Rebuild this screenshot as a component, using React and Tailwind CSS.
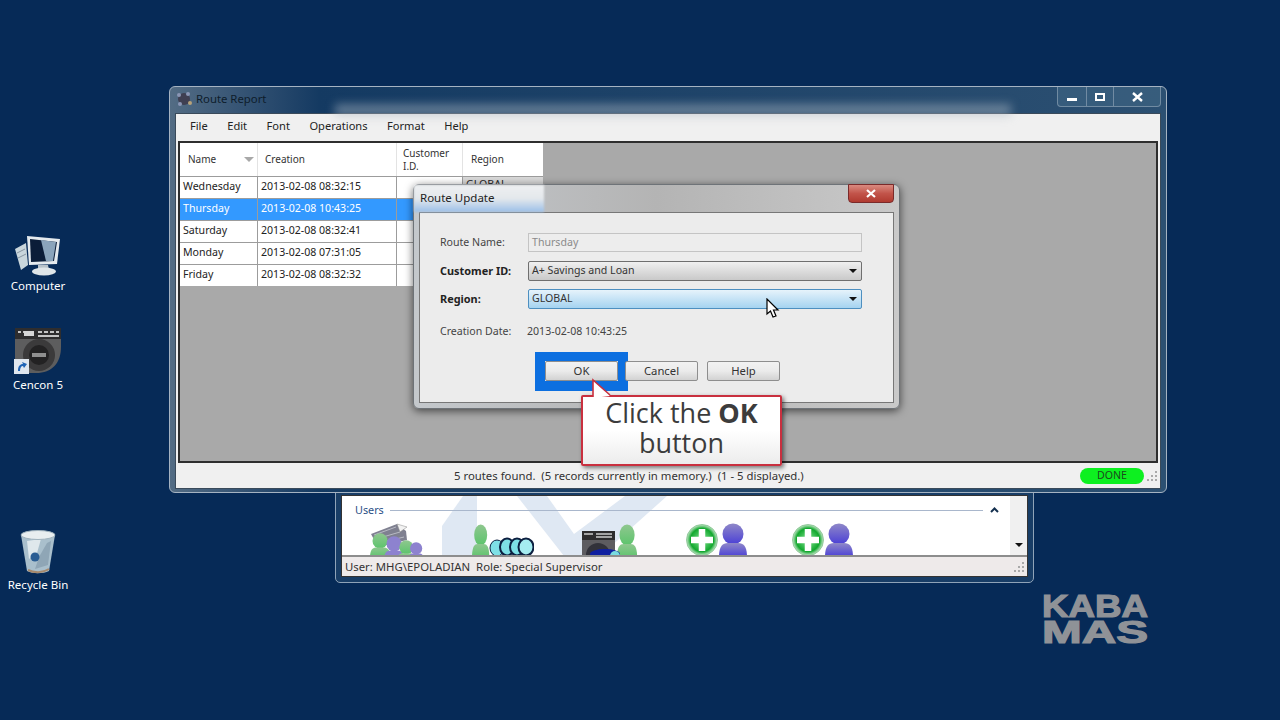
const rows = [
  ["Wednesday", "2013-02-08 08:32:15"],
  ["Thursday", "2013-02-08 10:43:25"],
  ["Saturday", "2013-02-08 08:32:41"],
  ["Monday", "2013-02-08 07:31:05"],
  ["Friday", "2013-02-08 08:32:32"],
];

const ComputerIcon = () => (
  <svg width="48" height="42" viewBox="0 0 48 42">
    <path d="M1 15 L12 9 L14 31 L7 36 Z" fill="#c9d6dc" />
    <path d="M3 19 L11 15 M4 24 L12 20" stroke="#8795a0" strokeWidth="1" />
    <path d="M13 2 L46 5 L43 30 L15 31 Z" fill="#e4eaee" />
    <path d="M16 5 L43 8 L40 27 L17 28 Z" fill="#0b1d38" />
    <path d="M27 6 L42 8 L39 27 L32 27 Z" fill="#8aa4bb" />
    <path d="M24 31 L34 31 L35 36 L24 36 Z" fill="#b7c2ca" />
    <ellipse cx="30" cy="37.5" rx="12" ry="4" fill="#dfe5e8" />
  </svg>
);

const CenconIcon = () => (
  <svg width="48" height="48" viewBox="0 0 48 48">
    <path d="M1 1 H47 V20 C47 36 38 46 22 46 H1 Z" fill="#5d5d5e" />
    <rect x="1" y="1" width="46" height="11" fill="#2e2d2e" />
    <path d="M4 5 H7 M9 5 H12 M24 5 H28 M30 5 H34 M36 5 H40 M42 5 H45 M24 9 H45" stroke="#c4c4c4" strokeWidth="2" />
    <rect x="10" y="4" width="10" height="5" fill="#d6d6d6" />
    <circle cx="25" cy="28" r="16" fill="#3b3a3b" />
    <circle cx="25" cy="28" r="10" fill="#232223" />
    <rect x="18" y="26" width="14" height="4" fill="#8f8f8f" />
    <rect x="0" y="32" width="15" height="15" fill="#dfe6ee" />
    <path d="M4 44 C4 39 6 37 9 37 L8 35 L13 37 L10 41 L9 39 C7 39 6 41 6 44 Z" fill="#1f63b5" />
  </svg>
);

const RecycleIcon = () => (
  <svg width="38" height="46" viewBox="0 0 38 46">
    <path d="M2 6 L36 6 L30 42 C24 45 14 45 8 42 Z" fill="#a9bfcc" />
    <path d="M8 12 L22 10 L18 24 L10 30 Z" fill="#dfe8ec" />
    <path d="M20 28 L28 14 L32 12 L29 36 L16 40 Z" fill="#8fa6b6" />
    <circle cx="16" cy="28" r="4.5" fill="#2a5d93" />
    <ellipse cx="19" cy="6" rx="17" ry="4.5" fill="#e8eef0" stroke="#9fb2bd" />
    <path d="M9 41 C15 44 24 44 30 40" stroke="#a6896d" strokeWidth="2" fill="none" />
  </svg>
);

const Person = ({ x, y = 0, fill, s = 1, sy }) => (
  <g transform={`translate(${x} ${y}) scale(${s} ${sy ?? s})`}>
    <circle cx="14" cy="11" r="10.5" fill={fill} />
    <path d="M0 34 C0 24 3 20 9 20 H19 C25 20 28 24 28 34 Z" fill={fill} />
  </g>
);

const Gradients = () => (
  <svg width="0" height="0" className="absolute">
    <defs>
      <linearGradient id="blue" x1="0" y1="0" x2="0" y2="1">
        <stop offset="0" stopColor="#8f88c8" />
        <stop offset="1" stopColor="#4a3fd6" />
      </linearGradient>
      <linearGradient id="green" x1="0" y1="0" x2="0" y2="1">
        <stop offset="0" stopColor="#8fc78f" />
        <stop offset="1" stopColor="#5cc46c" />
      </linearGradient>
      <radialGradient id="badge">
        <stop offset="0" stopColor="#8fe89c" />
        <stop offset="0.75" stopColor="#12a82e" />
        <stop offset="1" stopColor="#c8e8cc" />
      </radialGradient>
    </defs>
  </svg>
);

const PlusBadge = () => (
  <svg width="62" height="32" viewBox="0 0 62 32">
    <circle cx="16" cy="17" r="15.5" fill="url(#badge)" stroke="#7fbf8a" strokeWidth="0.8" />
    <path d="M16 6 V28 M5 17 H27" stroke="#fff" strokeWidth="6.5" />
    <Person x={33} y={0} fill="url(#blue)" />
  </svg>
);

const UserIcons = () => (
  <div className="flex h-[32px] items-end overflow-hidden">
    <svg className="ml-[28px]" width="54" height="32" viewBox="0 0 54 32">
      <path d="M1 11 L27 1 L36 8 L37 17 L8 24 Z" fill="#7f8090" />
      <path d="M4 12 L26 4 M6 16 L30 9 M9 20 L34 14" stroke="#b8bac4" strokeWidth="1" />
      <path d="M27 1 L37 4 L30 9 Z" fill="#f2f2f2" stroke="#888" strokeWidth="0.5" />
      <Person x={0} y={10} fill="url(#green)" s={0.72} />
      <Person x={14} y={13} fill="#8d82cf" s={0.72} />
      <Person x={27} y={17} fill="url(#green)" s={0.66} />
      <Person x={38} y={19} fill="#8d82cf" s={0.58} />
    </svg>
    <svg className="ml-[48px]" width="62" height="32" viewBox="0 0 62 32">
      <Person x={0} y={1} fill="url(#green)" s={0.62} sy={1} />
      <ellipse cx="25" cy="25" rx="7" ry="8" fill="#7ee0e6" stroke="#0c1f40" strokeWidth="1" />
      <ellipse cx="35" cy="24" rx="7" ry="8.5" fill="#7ee0e6" stroke="#0c1f40" strokeWidth="2" />
      <ellipse cx="45" cy="24" rx="7" ry="8.5" fill="#7ee0e6" stroke="#0c1f40" strokeWidth="2" />
      <ellipse cx="54" cy="24" rx="7.5" ry="8.5" fill="#a5ecf0" stroke="#0c1f40" strokeWidth="2" />
    </svg>
    <svg className="ml-[47px]" width="58" height="32" viewBox="0 0 58 32">
      <rect x="1" y="8" width="33" height="9" fill="#2d2c2d" />
      <path d="M3 11 H12 M15 11 H31 M15 14 H31" stroke="#ccc" strokeWidth="1.5" />
      <rect x="1" y="17" width="33" height="15" fill="#5d5c60" />
      <circle cx="17" cy="32" r="12" fill="#32323a" />
      <Person x={36} y={1} fill="url(#green)" s={0.72} sy={1} />
      <ellipse cx="24" cy="31" rx="15" ry="5" fill="#0f1fa0" />
      <circle cx="34" cy="33" r="5" fill="#79dbe0" />
    </svg>
    <div className="ml-[47px]"><PlusBadge /></div>
    <div className="ml-[44px]"><PlusBadge /></div>
  </div>
);

const Grip = () => (
  <svg width="12" height="12" viewBox="0 0 12 12" fill="#a9a9a9">
    <rect x="9" y="1" width="2" height="2" />
    <rect x="5" y="5" width="2" height="2" />
    <rect x="9" y="5" width="2" height="2" />
    <rect x="1" y="9" width="2" height="2" />
    <rect x="5" y="9" width="2" height="2" />
    <rect x="9" y="9" width="2" height="2" />
  </svg>
);

const Caret = () => (
  <svg width="8" height="4" viewBox="0 0 8 4"><path d="M0 0 H8 L4 4 Z" fill="#111" /></svg>
);

const Field = ({ label, bold, children }) => (
  <div className="flex items-center">
    <span className={`w-[88px] shrink-0 ${bold ? "text-[10.9px] font-bold text-[#222]" : "text-[#444]"}`}>{label}</span>
    {children}
  </div>
);

const DesktopIcon = ({ top, label, children }) => (
  <div className={`absolute left-0 flex w-[76px] flex-col items-center text-[11.5px] text-white ${top}`}>
    <div className="flex h-[46px] items-end">{children}</div>
    <span className="mt-[2px] leading-[16px]">{label}</span>
  </div>
);

const BtnClass = "flex h-[20px] w-[73px] items-center justify-center rounded-[2px] border border-[#8e8e8e] bg-gradient-to-b from-[#f2f2f2] via-[#ebebeb] to-[#d2d2d2] text-[11.3px] text-[#333]";

export default function App() {
  return (
    <div className="relative h-[720px] w-[1280px] overflow-hidden bg-[#062a57] text-[10.6px] [font-family:'Noto_Sans',sans-serif]">
      <Gradients />
      <DesktopIcon top="top-[230px]" label="Computer"><ComputerIcon /></DesktopIcon>
      <DesktopIcon top="top-[329px]" label="Cencon 5"><CenconIcon /></DesktopIcon>
      <DesktopIcon top="top-[529px]" label="Recycle Bin"><RecycleIcon /></DesktopIcon>

      {/* back window */}
      <div className="absolute left-[335px] top-[480px] flex h-[103px] w-[699px] flex-col rounded-[5px] border border-[#8fa3b8] bg-[#183d66] px-[5px] pb-[5px] pt-[14px]">
        <div className="flex min-h-0 flex-1 flex-col border border-[#333] bg-white">
          <div className="relative flex flex-1 overflow-hidden">
            <svg className="absolute left-0 top-0" width="400" height="62" viewBox="0 0 400 62">
              <path d="M121 0 H135 V60 H100 V30 Z" fill="#dfe8f3" />
              <path d="M175 0 H205 L232 38 L283 0 H325 L258 60 H222 Z" fill="#dfe8f3" />
            </svg>
            <div className="relative flex flex-1 flex-col pt-[5px]">
              <div className="flex items-center pl-[13px] pr-[11px]">
                <span className="text-[10.8px] leading-[18px] text-[#2a4f86]">Users</span>
                <div className="ml-[6px] h-px flex-1 bg-[#a9b7cc]" />
                <svg className="ml-[7px]" width="9" height="6" viewBox="0 0 9 6"><path d="M1 5 L4.5 1.5 L8 5" stroke="#14304f" strokeWidth="2" fill="none" /></svg>
              </div>
              <div className="mt-[4px]"><UserIcons /></div>
            </div>
            <div className="relative flex w-[17px] flex-col items-center justify-end bg-[#f0f0f0] pb-[8px]">
              <Caret />
            </div>
          </div>
          <div className="flex h-[21px] items-center justify-between border-t-2 border-[#8d8d8d] bg-[#eeeaea] pl-[3px] pr-[2px] text-[11.35px] text-[#333]">
            <span className="whitespace-pre">User: MHG\EPOLADIAN  Role: Special Supervisor</span>
            <Grip />
          </div>
        </div>
      </div>

      {/* main window */}
      <div className="absolute left-[169px] top-[86px] flex h-[407px] w-[998px] flex-col overflow-hidden rounded-[6px] border border-[#a5b3c2] bg-gradient-to-r from-[#536c84] via-[#143a62] via-15% to-[#2c5072] px-[5px] pb-[3px]">
        <div className="relative flex h-[26px] shrink-0 items-center">
          <div className="absolute left-[160px] right-[150px] top-[17px] h-[12px] bg-[#a9b5c2]/50 blur-[5px]" />
          <svg width="18" height="18" viewBox="0 0 18 18" className="relative mb-[2px]">
            <circle cx="9" cy="9" r="6" fill="#3f3f52" />
            <circle cx="4" cy="5" r="2" fill="#8b96b5" />
            <circle cx="13" cy="4" r="2" fill="#8b96b5" />
            <circle cx="15" cy="13" r="2" fill="#b8a27a" />
            <circle cx="5" cy="14" r="2" fill="#8b96b5" />
          </svg>
          <span className="relative mb-[2px] ml-[3px] text-[11.35px] text-[#0e1d2c]">Route Report</span>
          <div className="relative ml-auto flex h-[20px] self-start rounded-b-[4px] border border-t-0 border-[#8aa0b4]/70 bg-[#3f6583]/60">
            <div className="flex w-[29px] items-end justify-center border-r border-[#8aa0b4]/70 pb-[5px]"><div className="h-[3px] w-[10px] bg-white" /></div>
            <div className="flex w-[27px] items-center justify-center border-r border-[#8aa0b4]/70"><div className="h-[8px] w-[10px] border-2 border-white" /></div>
            <div className="flex w-[46px] items-center justify-center"><svg width="11" height="10" viewBox="0 0 11 10"><path d="M1 1 L10 9 M10 1 L1 9" stroke="#fff" strokeWidth="2.4" /></svg></div>
          </div>
        </div>

        <div className="flex min-h-0 flex-1 flex-col border border-[#3a4a5a] bg-[#f0f0f0]">
          <div className="flex h-[27px] shrink-0 items-center gap-[19.5px] pb-[2px] pl-[14px] text-[11.1px] text-[#222]">
            <span>File</span>
            <span>Edit</span>
            <span>Font</span>
            <span>Operations</span>
            <span>Format</span>
            <span>Help</span>
          </div>
          <div className="mx-[2px] flex min-h-0 flex-1 flex-col border-2 border-[#2e2e2e] bg-[#a9a9a9]">
            <div className="grid w-[363px] grid-cols-[78px_139px_66px_80px] text-[10px] text-[#333]">
              <div className="flex h-[33px] items-center justify-between border-r border-[#e3e3e3] bg-white pl-[8px] pr-[3px]">
                <span>Name</span>
                <svg width="10" height="5" viewBox="0 0 10 5"><path d="M0 0 H10 L5 5 Z" fill="#a8a8a8" /></svg>
              </div>
              <div className="flex items-center border-r border-[#e3e3e3] bg-white pl-[7px]">Creation</div>
              <div className="flex items-center border-r border-[#e3e3e3] bg-white pl-[6px] leading-[13px]">Customer<br />I.D.</div>
              <div className="flex items-center bg-white pl-[8px]">Region</div>
            </div>
            {rows.map(([name, date], i) => (
              <div
                key={name}
                className={`grid h-[22px] w-[363px] grid-cols-[78px_139px_66px_80px] border-t border-[#9c9c9c] ${i === 1 ? "bg-[#3399ff] text-white" : "bg-white text-[#222]"}`}
              >
                <div className="flex items-center border-r border-[#9c9c9c] pb-px pl-[3px]">{name}</div>
                <div className="flex items-center border-r border-[#9c9c9c] pb-px pl-[3px]">{date}</div>
                <div className="border-r border-[#9c9c9c]" />
                <div className={`pl-[3px] ${i === 0 ? "bg-[#d8d8d8]" : ""}`}>{i === 0 ? "GLOBAL" : ""}</div>
              </div>
            ))}
          </div>
          <div className="flex h-[25px] shrink-0 items-center pr-[2px]">
            <span className="ml-[278px] whitespace-pre text-[11.35px] text-[#333]">5 routes found.  (5 records currently in memory.)  (1 - 5 displayed.)</span>
            <div className="ml-auto mr-[2px] flex h-[16px] w-[64px] items-center justify-center rounded-full bg-[#0df020] text-[#1c4a1c]">DONE</div>
            <Grip />
          </div>
        </div>
      </div>

      {/* dialog */}
      <div className="absolute left-[413px] top-[184px] flex h-[225px] w-[487px] flex-col rounded-[6px] border border-[#6e7378] bg-gradient-to-r from-[#c4c8cc] via-[#b4b4b4] to-[#c9c9c9] px-[5px] pb-[5px] shadow-[0_2px_8px_rgba(0,0,0,0.6)]">
        <div className="relative flex h-[27px] shrink-0 items-center">
          <div className="absolute left-[-5px] top-0 h-[27px] w-[130px] bg-gradient-to-b from-[#eef0f2] via-[#e4e8ec] to-[#9cc0e8] blur-[1px]" />
          <span className="relative mb-[2px] ml-[1px] text-[11.5px] text-[#222]">Route Update</span>
          <div className="absolute right-[0px] top-[-1px] flex h-[19px] w-[46px] items-center justify-center rounded-b-[4px] border border-[#7a2a2a] bg-gradient-to-b from-[#d98a80] via-[#c2544a] to-[#b03a30]">
            <svg width="10" height="9" viewBox="0 0 10 9"><path d="M1 1 L9 8 M9 1 L1 8" stroke="#fff" strokeWidth="2.2" /></svg>
          </div>
        </div>
        <div className="flex flex-1 flex-col border border-[#777] bg-[#ececec] pl-[20px] pr-[31px] pt-[20px]">
          <div className="flex flex-col">
            <Field label="Route Name:">
              <div className="flex h-[19px] flex-1 items-center border border-[#c4c4c4] bg-[#ededed] pl-[3px] text-[#8a8a8a]">Thursday</div>
            </Field>
            <div className="mt-[9px]">
              <Field label="Customer ID:" bold>
                <div className="flex h-[20px] flex-1 items-center justify-between rounded-[2px] border border-[#6f6f6f] bg-gradient-to-b from-[#f0f0f0] to-[#c9c9c9] pl-[3px] pr-[4px] text-[10.6px] font-normal text-[#333]">
                  A+ Savings and Loan <Caret />
                </div>
              </Field>
            </div>
            <div className="mt-[8px]">
              <Field label="Region:" bold>
                <div className="flex h-[20px] flex-1 items-center justify-between rounded-[2px] border border-[#4d8fc0] bg-gradient-to-b from-[#e6f3fb] to-[#a5d3f0] pl-[3px] pr-[4px] text-[10.6px] font-normal text-[#333]">
                  GLOBAL <Caret />
                </div>
              </Field>
            </div>
          </div>
          <div className="mt-[14px] flex h-[18px] items-center text-[#444]">
            <span className="w-[87px]">Creation Date:</span>
            <span>2013-02-08 10:43:25</span>
          </div>
          <div className="ml-[105px] mt-[20px] flex">
            <div className="-mx-[10px] -mb-[10px] -mt-[9px] border-x-[10px] border-b-[10px] border-t-[9px] border-[#0c6fe0] bg-[#ececec]">
              <div className={`${BtnClass} border-[#5f9ec0] from-[#dcecf4] via-[#d8e8f0] to-[#b5d3e0]`}>OK</div>
            </div>
            <div className={`${BtnClass} ml-[7px]`}>Cancel</div>
            <div className={`${BtnClass} ml-[9px]`}>Help</div>
          </div>
        </div>
      </div>

      {/* mouse pointer */}
      <svg className="absolute left-[766px] top-[298px]" width="14" height="21" viewBox="0 0 14 21">
        <path d="M1 1 V16 L4.5 13 L7 19 L10 18 L7.5 12 H12 Z" fill="#fff" stroke="#000" strokeWidth="1.2" />
      </svg>

      {/* callout */}
      <div className="absolute left-[581px] top-[395px] flex h-[71px] w-[201px] flex-col items-center justify-center rounded-[2px] border-2 border-[#c9303f] bg-gradient-to-b from-white via-white to-[#ececec] pb-[5px] text-[27px] leading-[30px] text-[#3c3c3c] shadow-[2px_2px_4px_rgba(0,0,0,0.5)] [font-family:'Open_Sans',sans-serif]">
        <span>Click the <b>OK</b></span>
        <span>button</span>
      </div>
      <svg className="absolute left-[591px] top-[378px]" width="22" height="21" viewBox="0 0 22 21">
        <path d="M2 20 V2 L19 18" fill="#fff" />
        <path d="M2 19 V2 L19 17" fill="none" stroke="#c9303f" strokeWidth="1.6" />
      </svg>

      {/* logo */}
      <svg className="absolute left-[1040px] top-[586px]" width="110" height="64" viewBox="0 0 110 64">
        <text x="2" y="31" textLength="106" lengthAdjust="spacingAndGlyphs" fontFamily="Liberation Sans" fontWeight="700" fontSize="32" stroke="#8f9297" strokeWidth="1.2" fill="#8f9297">KABA</text>
        <text x="2" y="57" textLength="106" lengthAdjust="spacingAndGlyphs" fontFamily="Liberation Sans" fontWeight="700" fontSize="32" stroke="#8f9297" strokeWidth="1.2" fill="#8f9297">MAS</text>
      </svg>
    </div>
  );
}
